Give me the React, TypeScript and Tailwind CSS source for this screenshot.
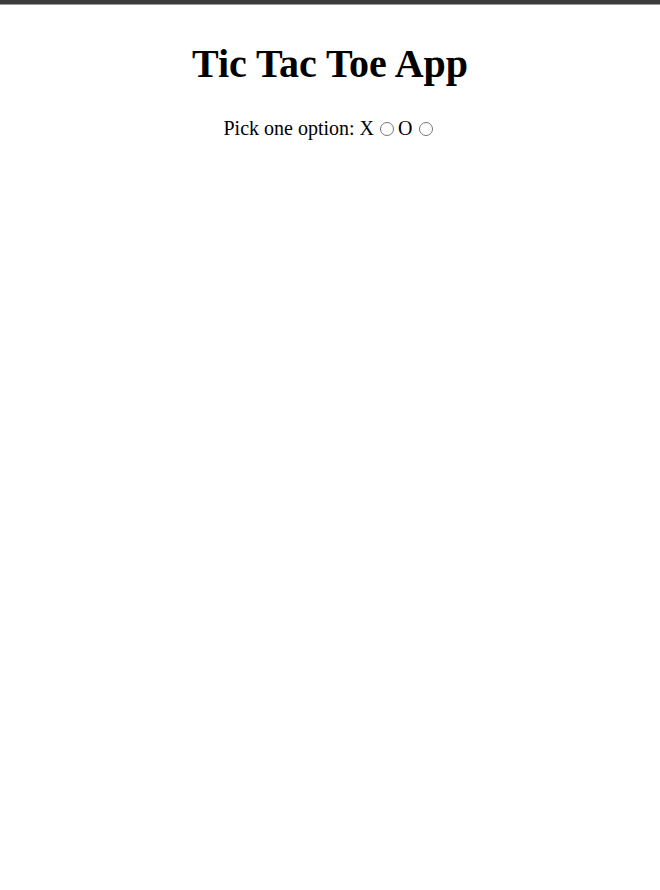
const App = () => (
  <div className="min-h-screen bg-white font-['Liberation_Serif',serif] text-black">
    <div className="h-[5px] bg-[#3b3b3b] border-b border-[#9a9a9a]" />
    <div className="flex flex-col items-center">
      <h1 className="mt-[32px] text-[40px] font-bold leading-[54px]">
        Tic Tac Toe App
      </h1>
      <div className="mt-[25px] text-[20px] leading-[24px]">
        Pick one option: X{" "}
        <input type="radio" name="pick" value="X" className="ml-[1px] mr-[4px] h-[14px] w-[14px] align-[-1px]" />
        O{" "}
        <input type="radio" name="pick" value="O" className="ml-[1px] mr-[4px] h-[14px] w-[14px] align-[-1px]" />
      </div>
    </div>
  </div>
);

export default App;
